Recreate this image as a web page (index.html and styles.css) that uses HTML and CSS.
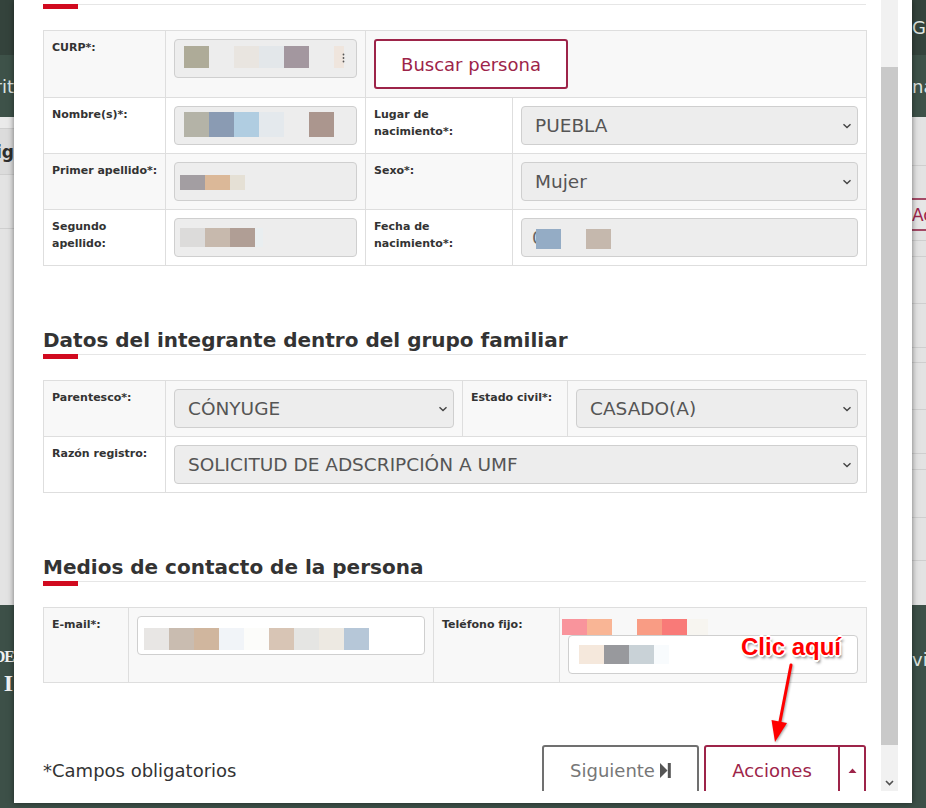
FILE: index.html
```html
<!DOCTYPE html>
<html lang="es">
<head>
<meta charset="utf-8">
<title>Registro de integrante</title>
<link rel="stylesheet" href="styles.css">
</head>
<body>
<div class="screen">
  <div class="side side-left">
    <div class="band band-top"></div>
    <div class="band band-nav frag-end"><span class="frag frag-light">Escrit</span></div>
    <div class="band band-light">
      <div class="lrow l-a"></div>
      <div class="lrow l-head frag-end"><span class="frag frag-dark">Códig</span></div>
      <div class="lrow l-b"></div>
    </div>
    <div class="band band-foot frag-end">
      <span class="frag frag-serif">GOBIERNO DE<br><span class="serif-big">MÉXICO I I</span></span>
    </div>
  </div>

  <div class="center">
    <div class="modal">
      <div class="viewport">
        <div class="sec-title sec-title-cut"></div>
        <div class="sec-bar"></div>

        <table class="ftable t1">
          <colgroup><col class="w122"><col class="w200"><col class="w147"><col class="w354"></colgroup>
          <tr>
            <td class="lbl">CURP*:</td>
            <td><div class="field"><span class="blur b-curp"></span><svg class="kebab" width="3" height="10" viewBox="0 0 3 10"><circle cx="1.5" cy="1.5" r="0.9"/><circle cx="1.5" cy="5" r="0.9"/><circle cx="1.5" cy="8.5" r="0.9"/></svg></div></td>
            <td colspan="2"><button class="btn-outline" type="button">Buscar persona</button></td>
          </tr>
          <tr>
            <td class="lbl">Nombre(s)*:</td>
            <td><div class="field"><span class="blur b-name"></span></div></td>
            <td class="lbl">Lugar de<br>nacimiento*:</td>
            <td><div class="select"><span>PUEBLA</span><svg class="chev" width="10" height="6" viewBox="0 0 10 6"><path d="M1.5 1.2 L5 4.6 L8.5 1.2"/></svg></div></td>
          </tr>
          <tr>
            <td class="lbl nowrap">Primer apellido*:</td>
            <td><div class="field"><span class="blur b-ap1"></span></div></td>
            <td class="lbl">Sexo*:</td>
            <td><div class="select"><span>Mujer</span><svg class="chev" width="10" height="6" viewBox="0 0 10 6"><path d="M1.5 1.2 L5 4.6 L8.5 1.2"/></svg></div></td>
          </tr>
          <tr>
            <td class="lbl">Segundo<br>apellido:</td>
            <td><div class="field"><span class="blur b-ap2"></span></div></td>
            <td class="lbl">Fecha de<br>nacimiento*:</td>
            <td><div class="field"><span class="date-char">0</span><span class="blur b-date"></span></div></td>
          </tr>
        </table>

        <h2 class="sec-title">Datos del integrante dentro del grupo familiar</h2>
        <div class="sec-bar"></div>

        <table class="ftable t2">
          <colgroup><col class="w122"><col class="w297"><col class="w105"><col class="w299"></colgroup>
          <tr>
            <td class="lbl">Parentesco*:</td>
            <td><div class="select"><span>CÓNYUGE</span><svg class="chev" width="10" height="6" viewBox="0 0 10 6"><path d="M1.5 1.2 L5 4.6 L8.5 1.2"/></svg></div></td>
            <td class="lbl">Estado civil*:</td>
            <td><div class="select"><span>CASADO(A)</span><svg class="chev" width="10" height="6" viewBox="0 0 10 6"><path d="M1.5 1.2 L5 4.6 L8.5 1.2"/></svg></div></td>
          </tr>
          <tr>
            <td class="lbl">Razón registro:</td>
            <td colspan="3"><div class="select"><span>SOLICITUD DE ADSCRIPCIÓN A UMF</span><svg class="chev" width="10" height="6" viewBox="0 0 10 6"><path d="M1.5 1.2 L5 4.6 L8.5 1.2"/></svg></div></td>
          </tr>
        </table>

        <h2 class="sec-title">Medios de contacto de la persona</h2>
        <div class="sec-bar"></div>

        <table class="ftable t3">
          <colgroup><col class="w85"><col class="w305"><col class="w126"><col class="w307"></colgroup>
          <tr>
            <td class="lbl">E-mail*:</td>
            <td><div class="field field-white"><span class="blur b-mail"></span></div></td>
            <td class="lbl">Teléfono fijo:</td>
            <td>
              <div class="blur b-tel-top"></div>
              <div class="field field-white"><span class="blur b-tel"></span></div>
            </td>
          </tr>
        </table>

        <div class="footer">
          <span class="req">*Campos obligatorios</span>
          <div class="actions">
            <button class="btn-next" type="button">Siguiente<svg class="step" width="11" height="15" viewBox="0 0 11 15"><path d="M0 0 L7.5 7.5 L0 15 Z"/><rect x="7.8" y="0" width="3" height="15"/></svg></button>
            <div class="btn-group">
              <button class="btn-main" type="button">Acciones</button>
              <button class="btn-caret" type="button" aria-label="Más acciones"><svg width="9" height="5" viewBox="0 0 9 5"><path d="M0.5 5 L4.5 0.6 L8.5 5 Z"/></svg></button>
            </div>
          </div>
        </div>
      </div>

      <div class="scrollbar">
        <div class="thumb"></div>
        <div class="sb-end"><svg width="9" height="6" viewBox="0 0 9 6"><path d="M1 1 L4.5 4.5 L8 1"/></svg></div>
      </div>

      <div class="callout">Clic aquí</div>
      <svg class="arrow" width="40" height="90" viewBox="0 0 40 90">
        <line x1="31" y1="5" x2="19.5" y2="64" />
        <path d="M15 82 L27 63 L11.5 60 Z" />
      </svg>
    </div>
  </div>

  <div class="side side-right">
    <div class="band band-top"><span class="frag frag-light">Gobierno</span></div>
    <div class="band band-nav"><span class="frag frag-light">nacional</span></div>
    <div class="band band-light">
      <div class="rrow h49"></div>
      <div class="rrow h32 nb"></div>
      <div class="rrow ac-box"><span class="frag frag-maroon">Acciones</span></div>
      <div class="rrow h10"></div>
      <div class="rrow h16"></div>
      <div class="rrow h47"></div>
      <div class="rrow h44"></div>
      <div class="rrow h15"></div>
      <div class="rrow h47"></div>
      <div class="rrow h44"></div>
      <div class="rrow h16"></div>
      <div class="rrow h48"></div>
      <div class="rrow h43"></div>
    </div>
    <div class="band band-foot"><span class="frag frag-light frag-vi">vinculación</span></div>
  </div>
</div>
</body>
</html>
```

FILE: styles.css
```css
* { box-sizing: border-box; }

html, body {
  margin: 0;
  padding: 0;
}

body {
  width: 926px;
  height: 808px;
  overflow: hidden;
  background: #3d5048;
  font-family: "DejaVu Sans", "Liberation Sans", sans-serif;
  color: #333;
}

button {
  font-family: inherit;
  margin: 0;
  padding: 0;
  background: #fff;
  cursor: pointer;
}

.screen {
  display: flex;
  width: 926px;
  height: 808px;
}

/* ---------- backdrop page (behind the modal) ---------- */
.side {
  width: 14px;
  flex: none;
  height: 808px;
  display: flex;
  flex-direction: column;
  overflow: hidden;
}

.band {
  display: flex;
  align-items: center;
  overflow: hidden;
  white-space: nowrap;
}

.band-top { height: 55px; background: #34433c; }
.band-nav { height: 62px; background: #3e5249; }
.band-light {
  height: 488px;
  background: #e3e3e3;
  flex-direction: column;
  align-items: stretch;
}
.band-foot {
  flex: 1;
  background: #3d5048;
  align-items: flex-start;
}

.frag-end { justify-content: flex-end; }

.frag {
  flex: none;
  white-space: nowrap;
}

.frag-light {
  color: #dfe6e2;
  font-size: 18px;
}

.frag-dark {
  color: #2e2e2e;
  font-size: 17px;
  font-weight: bold;
}

.frag-maroon {
  color: #9d2449;
  font-size: 17px;
}

.frag-serif {
  font-family: "Liberation Serif", serif;
  font-weight: bold;
  color: #f2f2f2;
  font-size: 16px;
  line-height: 27px;
  padding-top: 38px;
  letter-spacing: -1px;
  text-align: right;
}

.serif-big {
  font-size: 24px;
  letter-spacing: 1px;
}

.frag-vi { padding-top: 44px; }

.lrow { border-bottom: 1px solid #cfcfcf; display: flex; align-items: center; overflow: hidden; }
.l-a { height: 12px; background: #eaeaea; }
.l-head { height: 46px; background: #dcdcdc; }
.l-b { height: 54px; }

.rrow { border-bottom: 1px solid #cfcfcf; flex: none; display: flex; align-items: center; overflow: hidden; }
.rrow.nb { border-bottom: 0; }
.h49 { height: 49px; }
.h32 { height: 32px; }
.h10 { height: 10px; }
.h16 { height: 16px; }
.h47 { height: 47px; }
.h44 { height: 44px; }
.h15 { height: 15px; }
.h48 { height: 48px; }
.h43 { height: 43px; }
.ac-box {
  height: 33px;
  border-top: 2px solid #a34a66;
  border-bottom: 2px solid #a34a66;
  background: #e6e6e6;
}

/* ---------- modal ---------- */
.center {
  width: 898px;
  flex: none;
}

.modal {
  position: relative;
  display: flex;
  width: 898px;
  height: 803px;
  background: #fff;
  padding: 0 14px 12px 0;
  box-shadow: 0 0 6px rgba(0, 0, 0, 0.5);
}

.viewport {
  width: 867px;
  height: 791px;
  flex: none;
  overflow: hidden;
  padding: 0 15px 0 29px;
}

.scrollbar {
  width: 17px;
  height: 791px;
  flex: none;
  background: #f1f1f1;
  display: flex;
  flex-direction: column;
}

.thumb {
  margin-top: 67px;
  height: 678px;
  background: #c9c9c9;
}

.sb-end {
  flex: 1;
  display: flex;
  align-items: flex-end;
  justify-content: center;
  padding-bottom: 5px;
}

.sb-end path {
  fill: none;
  stroke: #505050;
  stroke-width: 1.6;
}

/* ---------- section headings ---------- */
.sec-title {
  margin: 62px 0 0;
  font-size: 20px;
  font-weight: bold;
  line-height: 24px;
  padding-bottom: 2px;
  border-bottom: 1px solid #e6e6e6;
  color: #333;
}

.sec-title-cut {
  margin-top: 0;
  height: 5px;
  padding: 0;
}

.sec-bar {
  width: 35px;
  height: 5px;
  margin-top: -1px;
  background: #d10a1f;
}

/* ---------- form tables ---------- */
.ftable {
  width: 823px;
  margin-top: 21px;
  border-collapse: collapse;
  table-layout: fixed;
}

.w85 { width: 85px; }
.w105 { width: 105px; }
.w122 { width: 122px; }
.w126 { width: 126px; }
.w147 { width: 147px; }
.w200 { width: 200px; }
.w297 { width: 297px; }
.w299 { width: 299px; }
.w305 { width: 305px; }
.w307 { width: 307px; }
.w354 { width: 354px; }

.ftable td {
  border: 1px solid #dedede;
  padding: 8px;
  vertical-align: top;
  background: #fff;
}

.ftable tr:nth-child(odd) td {
  background: #f8f8f8;
}

.ftable td.lbl {
  font-size: 11px;
  font-weight: bold;
  line-height: 17px;
  color: #333;
}

.ftable td.nowrap {
  white-space: nowrap;
  padding-right: 0;
}

.field {
  height: 39px;
  border: 1px solid #cfcfcf;
  border-radius: 4px;
  background: #ededed;
  display: flex;
  align-items: flex-start;
  overflow: hidden;
}

.field-white { background: #fff; }

.select {
  height: 39px;
  border: 1px solid #cfcfcf;
  border-radius: 4px;
  background: #ededed;
  display: flex;
  align-items: center;
  justify-content: space-between;
  padding: 0 5px 0 13px;
  font-size: 18.5px;
  color: #555;
  white-space: nowrap;
}

.chev path {
  fill: none;
  stroke: #444;
  stroke-width: 1.4;
}

.kebab {
  flex: none;
  margin: 13px 0 0 -2px;
  fill: #555;
}

/* pixelated (censored) field contents */
.blur { display: block; flex: none; }

.b-curp {
  width: 160px; height: 22px; margin: 6px 0 0 9px;
  background: linear-gradient(to right, #aeab98 0 25px, transparent 25px 50px, #e9e5e0 50px 75px, #e3e7ea 75px 100px, #a3979f 100px 125px, transparent 125px 150px, #efe5dd 150px 160px);
}

.b-name {
  width: 150px; height: 25px; margin: 5px 0 0 9px;
  background: linear-gradient(to right, #b4b3a7 0 25px, #8a9bb3 25px 50px, #b0cde1 50px 75px, #e4e9ed 75px 100px, transparent 100px 125px, #ab968e 125px 150px);
}

.b-ap1 {
  width: 65px; height: 15px; margin: 12px 0 0 5px;
  background: linear-gradient(to right, #a39ea2 0 25px, #dbb898 25px 50px, #e5e0d5 50px 65px);
}

.b-ap2 {
  width: 83px; height: 19px; margin: 9px 0 0 5px;
  background: linear-gradient(to right, #dcdbda 0 25px, #c7b9ad 25px 50px, #b09e95 50px 75px, #e9eef0 75px 83px);
}

.date-char {
  flex: none;
  width: 4px;
  margin-left: 10px;
  overflow: hidden;
  font-size: 18px;
  line-height: 37px;
  color: #666;
}

.b-date {
  width: 75px; height: 20px; margin: 10px 0 0 0;
  background: linear-gradient(to right, #94acc5 0 25px, transparent 25px 50px, #c5b8ad 50px 75px);
}

.b-mail {
  width: 225px; height: 22px; margin: 11px 0 0 6px;
  background: linear-gradient(to right, #e8e6e4 0 25px, #c9bcb0 25px 50px, #d0b69e 50px 75px, #f1f4f8 75px 100px, #fcfcfa 100px 125px, #d8c5b5 125px 150px, #e5e5e3 150px 175px, #ede9e2 175px 200px, #b6c7d8 200px 225px);
}

.b-tel-top {
  width: 146px; height: 16px; margin: 3px 0 0 -6px;
  background: linear-gradient(to right, #f9949c 0 25px, #f9b595 25px 50px, transparent 50px 75px, #f99c84 75px 100px, #f97a78 100px 125px, #f7f5f0 125px 146px);
}

.b-tel {
  width: 90px; height: 19px; margin: 9px 0 0 10px;
  background: linear-gradient(to right, #f5e8dc 0 25px, #98999d 25px 50px, #c9d2d7 50px 75px, #f8fbfd 75px 90px);
}

/* ---------- buttons ---------- */
.btn-outline {
  display: flex;
  align-items: center;
  justify-content: center;
  width: 194px;
  height: 50px;
  border: 2px solid #9d2449;
  border-radius: 3px;
  color: #9d2449;
  font-size: 18px;
}

.footer {
  display: flex;
  justify-content: space-between;
  align-items: center;
  margin-top: 62px;
}

.req {
  font-size: 18px;
  color: #333;
}

.actions {
  display: flex;
  gap: 5px;
}

.btn-next {
  display: flex;
  align-items: center;
  justify-content: center;
  gap: 5px;
  width: 157px;
  height: 50px;
  border: 2px solid #707070;
  border-radius: 3px;
  color: #777;
  font-size: 18px;
}

.step { fill: #555; }

.btn-group { display: flex; }

.btn-main {
  width: 136px;
  height: 50px;
  border: 2px solid #9d2449;
  border-radius: 3px 0 0 3px;
  color: #9d2449;
  font-size: 18px;
}

.btn-caret {
  display: flex;
  align-items: center;
  justify-content: center;
  width: 26px;
  height: 50px;
  border: 2px solid #9d2449;
  border-left: 0;
  border-radius: 0 3px 3px 0;
}

.btn-caret svg { fill: #9d2449; }

/* ---------- annotation overlay ---------- */
.callout {
  position: absolute;
  left: 727px;
  top: 633px;
  font-family: "Liberation Sans", Arial, sans-serif;
  font-weight: bold;
  font-size: 24px;
  line-height: 28px;
  color: #ff0000;
  white-space: nowrap;
  text-shadow:
    -1px -1px 0 #fff, 1px -1px 0 #fff, -1px 1px 0 #fff, 1px 1px 0 #fff,
    0 -2px 0 #fff, 0 2px 0 #fff, -2px 0 0 #fff, 2px 0 0 #fff,
    2px 3px 3px rgba(0, 0, 0, 0.55);
}

.arrow {
  position: absolute;
  left: 746px;
  top: 660px;
  overflow: visible;
  filter: drop-shadow(1px 1px 1px rgba(0, 0, 0, 0.35));
}

.arrow line {
  stroke: #ff0000;
  stroke-width: 3;
  stroke-linecap: round;
}

.arrow path { fill: #ff0000; }
```
